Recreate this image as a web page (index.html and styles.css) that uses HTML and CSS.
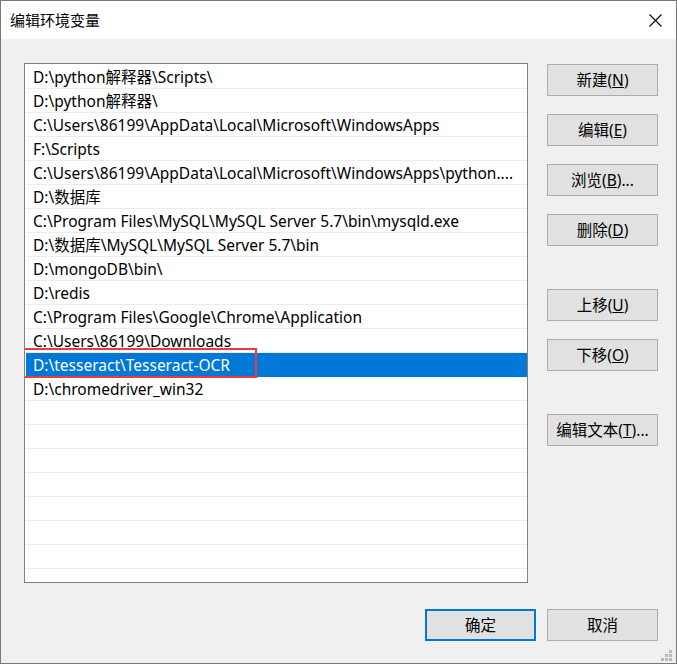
FILE: index.html
```html
<!DOCTYPE html>
<html lang="zh-CN">
<head>
<meta charset="utf-8">
<title>编辑环境变量</title>
<link rel="stylesheet" href="styles.css">
</head>
<body>
<div class="window">
  <div class="titlebar">
    <span class="title">编辑环境变量</span>
    <svg class="close" width="13" height="13" viewBox="0 0 13 13"><path d="M0.5 0.5 L12.5 12.5 M12.5 0.5 L0.5 12.5" stroke="#000" stroke-width="1.1" fill="none"/></svg>
  </div>
  <div class="content">
    <div class="main">
      <div class="listbox">
        <div class="row">D:\python解释器\Scripts\</div>
        <div class="row">D:\python解释器\</div>
        <div class="row">C:\Users\86199\AppData\Local\Microsoft\WindowsApps</div>
        <div class="row">F:\Scripts</div>
        <div class="row">C:\Users\86199\AppData\Local\Microsoft\WindowsApps\python....</div>
        <div class="row">D:\数据库</div>
        <div class="row">C:\Program Files\MySQL\MySQL Server 5.7\bin\mysqld.exe</div>
        <div class="row">D:\数据库\MySQL\MySQL Server 5.7\bin</div>
        <div class="row">D:\mongoDB\bin\</div>
        <div class="row">D:\redis</div>
        <div class="row">C:\Program Files\Google\Chrome\Application</div>
        <div class="row">C:\Users\86199\Downloads</div>
        <div class="row selected">D:\tesseract\Tesseract-OCR</div>
        <div class="row">D:\chromedriver_win32</div>
        <div class="row"></div>
        <div class="row"></div>
        <div class="row"></div>
        <div class="row"></div>
        <div class="row"></div>
        <div class="row"></div>
        <div class="row"></div>
        <div class="row"></div>
        <div class="annot"></div>
      </div>
      <div class="side">
        <button class="btn b-new">新建(<u>N</u>)</button>
        <button class="btn b-gap">编辑(<u>E</u>)</button>
        <button class="btn b-gap">浏览(<u>B</u>)...</button>
        <button class="btn b-gap">删除(<u>D</u>)</button>
        <button class="btn b-far">上移(<u>U</u>)</button>
        <button class="btn b-gap">下移(<u>O</u>)</button>
        <button class="btn b-far">编辑文本(<u>T</u>)...</button>
      </div>
    </div>
    <div class="footer">
      <button class="btn primary">确定</button>
      <button class="btn">取消</button>
    </div>
    <svg class="grip" width="12" height="12" viewBox="0 0 12 12" fill="#b9b9b9">
      <rect x="8" y="0" width="3" height="3"/>
      <rect x="4" y="4" width="3" height="3"/><rect x="8" y="4" width="3" height="3"/>
      <rect x="0" y="8" width="3" height="3"/><rect x="4" y="8" width="3" height="3"/><rect x="8" y="8" width="3" height="3"/>
    </svg>
  </div>
</div>
</body>
</html>
```
FILE: styles.css
```css
* { box-sizing: border-box; }
html, body { margin: 0; padding: 0; background: #f0f0f0; }
body {
  font-family: "Noto Sans", "Noto Sans CJK SC", sans-serif;
  font-size: 15px;
  color: #000;
}
.window {
  width: 677px;
  height: 664px;
  border: 1px solid #777777;
  background: #f0f0f0;
  display: flex;
  flex-direction: column;
}
.titlebar {
  height: 38px;
  background: #ffffff;
  display: flex;
  align-items: center;
  padding-left: 9px;
  flex: none;
}
.title { font-size: 15px; line-height: 20px; }
.close { margin-left: auto; margin-right: 14px; }
.content {
  flex: 1;
  position: relative;
  padding: 24px 18px 0 23px;
}
.main { display: flex; gap: 19px; }
.listbox {
  position: relative;
  width: 504px;
  height: 520px;
  border: 1px solid #828282;
  background: #ffffff;
  padding: 1px 0 0 0;
  overflow: hidden;
}
.row {
  height: 24px;
  margin: 0 0 0 1px;
  border-bottom: 1px solid #ececec;
  padding: 2px 0 0 7px;
  font-size: 15.5px;
  line-height: 21px;
  white-space: nowrap;
  overflow: hidden;
}
.row.selected { background: #0078d7; color: #ffffff; border-bottom-color: #0078d7; }
.annot {
  position: absolute;
  left: -2px;
  top: 284px;
  width: 234px;
  height: 30px;
  border: 2px solid #f03a3a;
}
.side { width: 111px; display: flex; flex-direction: column; }
.btn {
  height: 32px;
  width: 111px;
  background: #e1e1e1;
  border: 1px solid #adadad;
  font-family: inherit;
  font-size: 15.5px;
  color: #000;
  padding: 0;
  margin: 0;
  line-height: 20px;
}
.b-new { margin-top: 1px; }
.b-gap { margin-top: 18px; }
.b-far { margin-top: 43px; }
.footer {
  display: flex;
  justify-content: flex-end;
  gap: 11px;
  margin-top: 26px;
}
.btn.primary { border: 2px solid #0078d7; }
.grip { position: absolute; right: 3px; bottom: 1px; }
```
